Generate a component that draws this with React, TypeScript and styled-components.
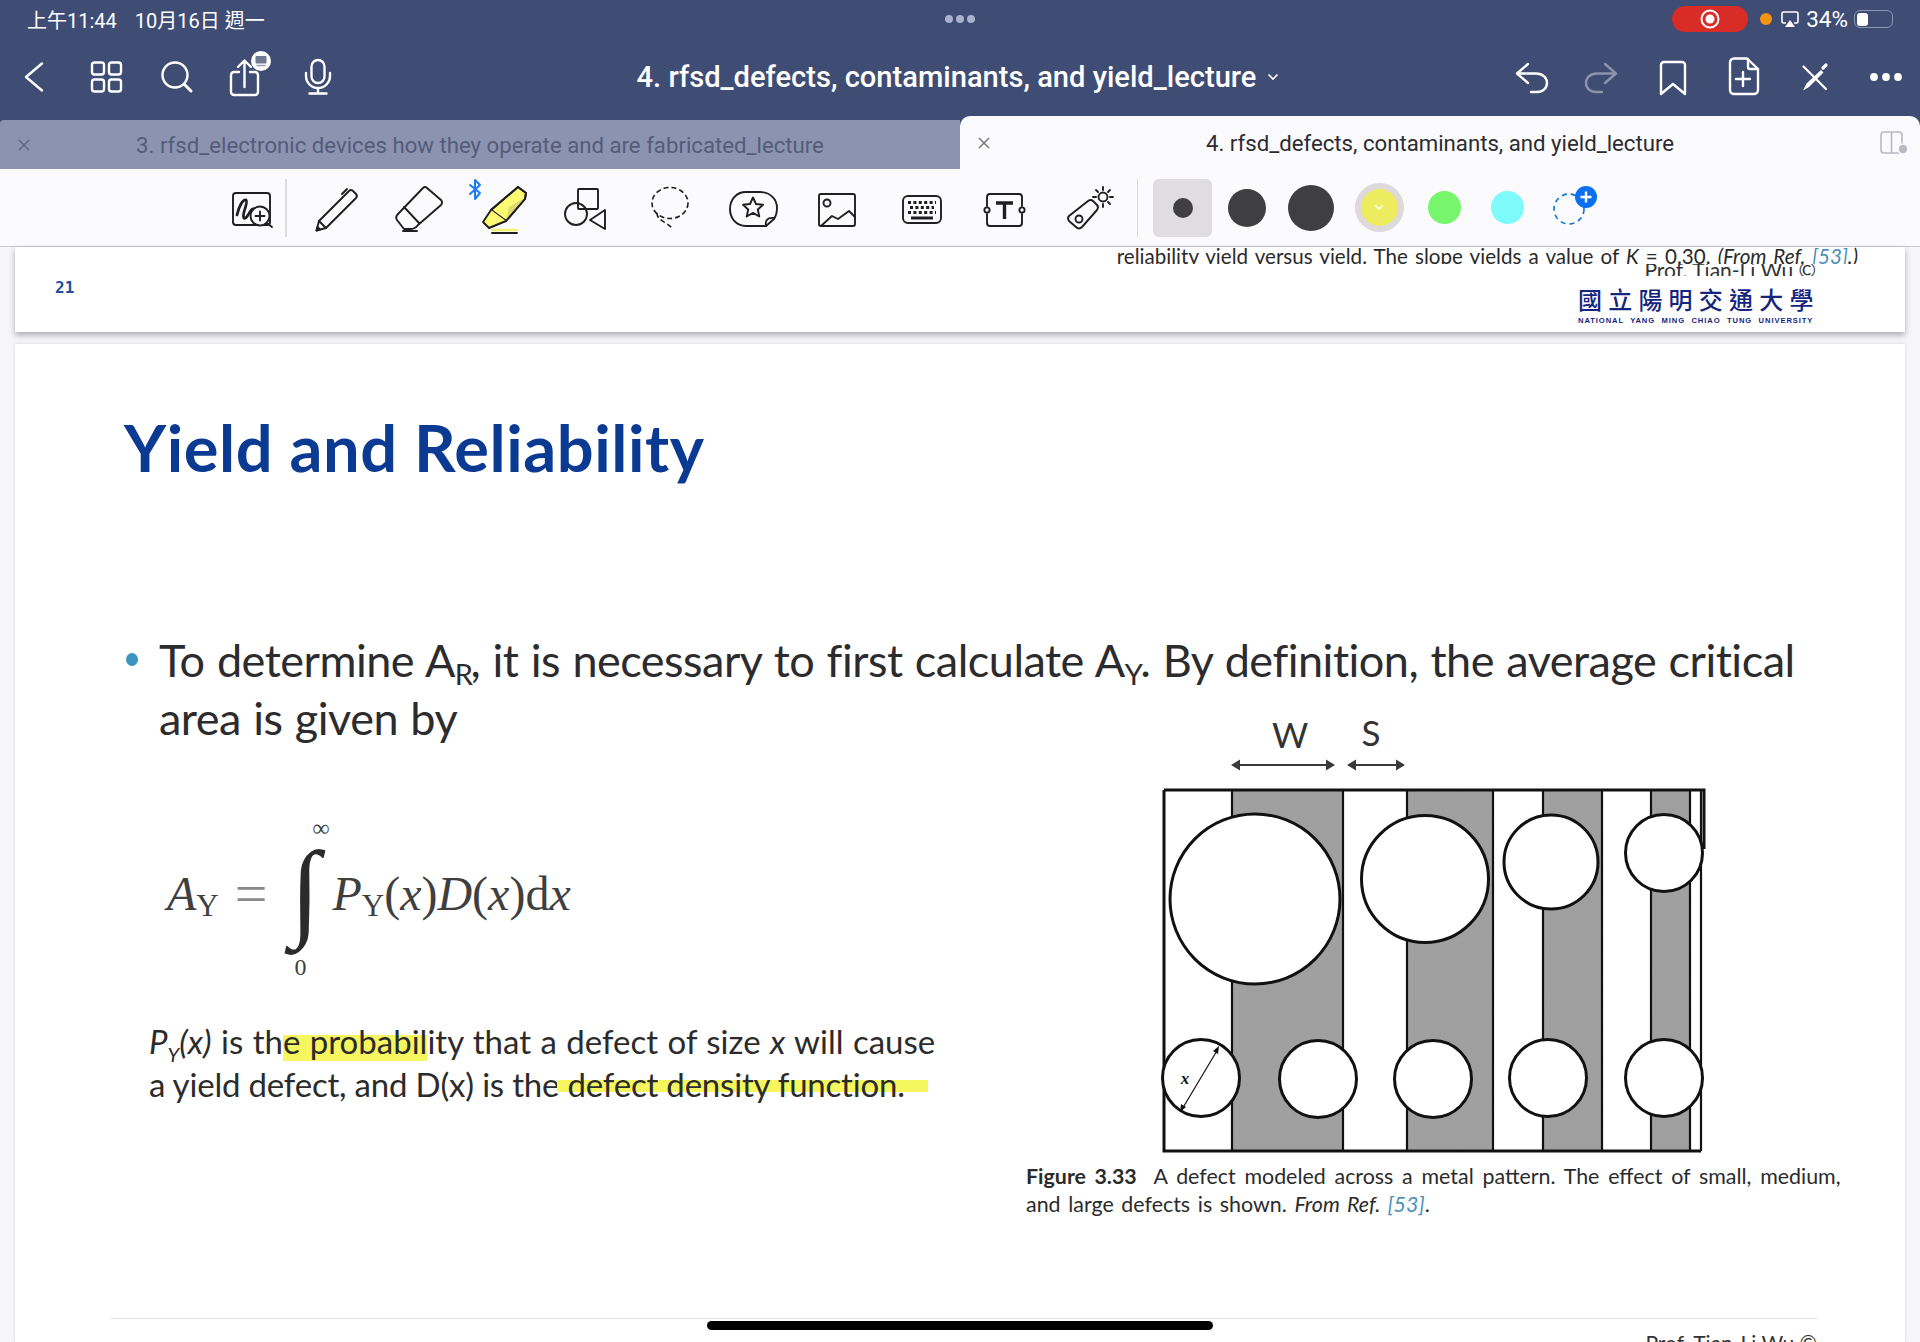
import React from 'react';
import styled, { createGlobalStyle } from 'styled-components';

const GlobalStyle = createGlobalStyle`
  html, body { margin: 0; padding: 0; height: 100%; background: #f6f5f8; }
  #root { height: 100%; }
  * { box-sizing: border-box; }
`;

const Screen = styled.div`
  width: 1920px;
  height: 1342px;
  display: flex;
  flex-direction: column;
  overflow: hidden;
  position: relative;
  font-family: Roboto, "Noto Sans CJK TC", sans-serif;
`;

const Header = styled.header`
  background: #3f4d74;
  height: 116px;
  flex: none;
  color: #fff;
`;

const StatusBar = styled.div`
  height: 38px;
  display: grid;
  grid-template-columns: 1fr auto 1fr;
  align-items: center;
  padding: 0 27px 0 27px;
`;

const Clock = styled.div`
  display: flex;
  gap: 18px;
  font-size: 20px;
  color: #fff;
  font-family: Roboto, "Noto Sans CJK TC", sans-serif;
`;

const Handle = styled.div`
  display: flex;
  gap: 3px;
`;

const HandleDot = styled.span`
  width: 8px;
  height: 8px;
  border-radius: 50%;
  background: #a9b1cc;
`;

const StatusRight = styled.div`
  display: flex;
  align-items: center;
  justify-content: flex-end;
`;

const RecordPill = styled.div`
  width: 76px;
  height: 26px;
  border-radius: 13px;
  background: #d92c27;
  display: flex;
  align-items: center;
  justify-content: center;
  margin-right: 12px;
`;

const OrangeDot = styled.span`
  width: 12px;
  height: 12px;
  border-radius: 50%;
  background: #f59314;
  margin-right: 9px;
`;

const Battery = styled.div`
  width: 39px;
  height: 18px;
  border: 1.5px solid #8d95b0;
  border-radius: 6px;
  padding: 1.5px;
  margin-left: 6px;
`;

const BatteryFill = styled.div`
  width: 34%;
  height: 100%;
  background: #fff;
  border-radius: 3px;
`;

const Percent = styled.span`
  font-size: 22.5px;
  margin-left: 7px;
`;

const NavRow = styled.div`
  height: 78px;
  display: grid;
  grid-template-columns: 1fr auto 1fr;
  align-items: center;
  padding: 0 14px 0 14px;
`;

const IconGroup = styled.div<{ $end?: boolean }>`
  display: flex;
  gap: 31px;
  justify-content: ${p => (p.$end ? 'flex-end' : 'flex-start')};
`;

const NavIcon = styled.svg<{ $dim?: boolean }>`
  width: 40px;
  height: 40px;
  overflow: visible;
  fill: none;
  stroke: ${p => (p.$dim ? '#8c94ad' : '#fff')};
  stroke-width: 2.4;
  stroke-linecap: round;
  stroke-linejoin: round;
`;

const DocTitle = styled.div`
  font-size: 29.1px;
  font-weight: 500;
  display: flex;
  align-items: center;
  gap: 11px;
  margin-left: -4px;
`;

const Tabs = styled.div`
  height: 53px;
  flex: none;
  display: flex;
  background: #3f4d74;
`;

const Tab = styled.div<{ $active?: boolean }>`
  width: 960px;
  position: relative;
  display: flex;
  align-items: center;
  justify-content: center;
  font-size: 22.2px;
  background: ${p => (p.$active ? '#fbfafc' : '#8b93b0')};
  color: ${p => (p.$active ? '#2c2c30' : '#545c7a')};
  margin-top: ${p => (p.$active ? '0' : '4px')};
  border-radius: ${p => (p.$active ? '10px 10px 0 0' : '4px 0 0 0')};
`;

const TabClose = styled.svg<{ $active?: boolean }>`
  position: absolute;
  left: 18px;
  top: 50%;
  margin-top: -6px;
  width: 12px;
  height: 12px;
  fill: none;
  stroke: ${p => (p.$active ? '#77777d' : '#5f6786')};
  stroke-width: 1.5;
`;

const SplitIcon = styled.svg`
  position: absolute;
  right: 11px;
  top: 15px;
  width: 29px;
  height: 24px;
  fill: none;
  stroke: #b9b9c0;
  stroke-width: 1.6;
`;

const Toolbar = styled.div`
  height: 78px;
  flex: none;
  background: #fbfafc;
  border-bottom: 1.5px solid #c9c8cd;
  display: flex;
  align-items: center;
  padding-left: 228px;
`;

const ToolIcon = styled.svg<{ $first?: boolean }>`
  width: ${p => (p.$first ? 48 : 60)}px;
  height: 60px;
  margin-top: 2px;
  flex: none;
  overflow: visible;
  fill: none;
  stroke: #1f1f22;
  stroke-width: 1.9;
  stroke-linecap: round;
  stroke-linejoin: round;
`;

const ToolList = styled.div`
  display: flex;
  gap: 23.6px;
`;

const VSep = styled.div<{ $l: number; $r: number }>`
  width: 1.5px;
  height: 58px;
  background: #dcdbe0;
  margin: 0 ${p => p.$r}px 0 ${p => p.$l}px;
  flex: none;
`;

const ColorSlot = styled.div<{ $w: number; $sel?: boolean }>`
  width: ${p => p.$w}px;
  height: 58px;
  flex: none;
  display: flex;
  align-items: center;
  justify-content: center;
  border-radius: 6px;
  position: relative;
  background: ${p => (p.$sel ? '#dfdde2' : 'transparent')};
`;

const Swatch = styled.span<{ $size: number; $color: string; $ring?: boolean }>`
  width: ${p => p.$size}px;
  height: ${p => p.$size}px;
  border-radius: 50%;
  background: ${p => p.$color};
  display: flex;
  align-items: center;
  justify-content: center;
  color: #fff;
  ${p => (p.$ring ? 'box-shadow: 0 0 0 6px #dedadc;' : '')}
`;

const AddColor = styled.svg`
  width: 50px;
  height: 50px;
  overflow: visible;
`;

const Canvas = styled.main`
  flex: 1;
  min-height: 0;
  background: #f6f5f8;
  padding: 0 15px;
  display: flex;
  flex-direction: column;
  gap: 12px;
`;

const PrevPage = styled.section`
  height: 85px;
  flex: none;
  background: #fff;
  box-shadow: 0 3px 6px rgba(60, 60, 70, 0.4);
  display: flex;
  justify-content: space-between;
  padding-right: 47px;
`;

const PageNumber = styled.div`
  margin: 31px 0 0 40px;
  font: 700 16px "DejaVu Sans Mono", monospace;
  color: #1c4fa0;
`;

const PrevRight = styled.div`
  display: flex;
  flex-direction: column;
  align-items: flex-end;
`;

const CutCaption = styled.div`
  height: 17px;
  overflow: hidden;
  font: 400 20.6px/19px Lato, sans-serif;
  color: #2a2a2a;
  white-space: nowrap;
  word-spacing: 1.9px;
`;

const CutSign = styled.div`
  height: 12px;
  margin-right: 42px;
  overflow: hidden;
  display: flex;
  align-items: flex-end;
  font: 400 21px/12px Lato, sans-serif;
  color: #333;
  white-space: nowrap;
`;

const Logo = styled.div`
  margin: 9px 44px 0 0;
  width: 236px;
  color: #15257d;
`;

const LogoCn = styled.div`
  font: 500 24px/27px "Noto Sans CJK TC", sans-serif;
  letter-spacing: 6.2px;
  white-space: nowrap;
`;

const LogoEn = styled.div`
  font: 700 7.6px/10px "Liberation Sans", sans-serif;
  white-space: nowrap;
  word-spacing: 3.4px;
  letter-spacing: 0.92px;
  margin-top: 4px;
`;

const Page = styled.section`
  flex: 1;
  min-height: 0;
  background: #fff;
  padding: 73px 0 0 0;
  position: relative;
  overflow: hidden;
  box-shadow: 0 0 3px rgba(60, 60, 70, 0.18);
`;

const SlideTitle = styled.h1`
  margin: 0 0 0 109px;
  font: 700 65px/60px Lato, sans-serif;
  color: #0b3a93;
  letter-spacing: 0.55px;
  white-space: nowrap;
`;

const BulletRow = styled.div`
  margin: 154px 0 0 109px;
  display: flex;
`;

const BulletDot = styled.span`
  width: 12px;
  height: 13px;
  border-radius: 50%;
  background: #3a93c0;
  margin: 22px 21px 0 2px;
  flex: none;
`;

const BulletText = styled.p`
  margin: 0;
  font: 400 45px/58px Lato, sans-serif;
  color: #2c2b2d;
  white-space: nowrap;
  letter-spacing: -0.5px;
  word-spacing: 1.3px;
  sub {
    font-size: 29px;
    line-height: 0;
    vertical-align: -8px;
    margin-right: -2px;
  }
`;

const Lower = styled.div`
  display: flex;
  align-items: flex-start;
`;

const LeftCol = styled.div`
  width: 1011px;
  padding: 63px 0 0 134px;
`;

const Formula = styled.div`
  height: 168px;
  margin: 0 0 0 18px;
  display: flex;
  align-items: center;
  font: italic 400 48px/1 "Liberation Serif", serif;
  color: #3f3f3f;
  sub {
    font-size: 31px;
    font-style: normal;
    line-height: 0;
    margin-top: 24px;
  }
`;

const Equals = styled.span`
  font: 400 58px/1 "Liberation Serif", serif;
  color: #8a8a8a;
  margin: 0 13px 0 16px;
`;

const IntegralStack = styled.div`
  width: 48px;
  height: 168px;
  position: relative;
  font-style: normal;
  margin-right: 4px;
`;

const IntegralMark = styled.span`
  position: absolute;
  left: 10px;
  top: 26px;
  font: 400 108px/108px "Liberation Serif", serif;
  color: #2b2b2b;
`;

const Limit = styled.span<{ $top: number; $left: number }>`
  position: absolute;
  top: ${p => p.$top}px;
  left: ${p => p.$left}px;
  font: 400 24px/24px "Liberation Serif", serif;
`;

const Upright = styled.span`
  font-style: normal;
`;

const Description = styled.p`
  margin: 42px 0 0 0;
  font: 400 33px/43px Lato, sans-serif;
  color: #2b2b2b;
  white-space: nowrap;
  i sub {
    font-size: 20px;
    line-height: 0;
  }
`;

// lines of the page were justified one by one, so each gets its own spacing
const Line = styled.span<{ $word: number; $letter?: number }>`
  word-spacing: ${p => p.$word}px;
  letter-spacing: ${p => p.$letter ?? 0}px;
`;

const Marker = styled.span<{ $thin?: boolean }>`
  position: relative;
  background: ${p =>
    p.$thin
      ? 'linear-gradient(transparent 40%, #f6f65e 40%, #f6f65e 70%, transparent 70%)'
      : 'linear-gradient(transparent 35%, #f6f65e 35%, #f6f65e 100%)'};
  padding: ${p => (p.$thin ? '0 23px 0 11px' : '0')};
  margin: ${p => (p.$thin ? '0 -23px 0 -11px' : '0')};
  ${p =>
    p.$thin
      ? ''
      : `&::before {
    content: '';
    position: absolute;
    left: 0;
    bottom: -5px;
    width: 18px;
    height: 8px;
    border-radius: 0 0 6px 6px;
    background: #f6f65e;
    z-index: -1;
  }`}
`;

const RightCol = styled.div`
  margin: -36px 0 0 0;
  width: 860px;
`;

const FigureArt = styled.svg`
  display: block;
  width: 550px;
  height: 448px;
  margin-left: 134px;
`;

const FigureCaption = styled.p`
  margin: 4px 0 0 0;
  font: 400 21.4px/27.5px Lato, sans-serif;
  color: #2b2b2b;
  white-space: nowrap;
  b {
    font-weight: 700;
  }
`;

const RefLink = styled.span`
  color: #4a8fb5;
`;

const FootLine = styled.div`
  position: absolute;
  left: 96px;
  right: 88px;
  top: 974px;
  height: 1px;
  background: #dfdfdf;
`;

const FootSign = styled.div`
  position: absolute;
  top: 987px;
  right: 88px;
  font: 400 21px/24px Lato, sans-serif;
  color: #333;
`;

const HomeBar = styled.div`
  position: absolute;
  left: 707px;
  top: 1321px;
  width: 506px;
  height: 9px;
  border-radius: 5px;
  background: #000;
`;

// header icons, all drawn in a 40 box
const BackIcon = () => <NavIcon viewBox="0 0 40 40"><path d="M28 6.5 12 20l16 13.5" /></NavIcon>;

const GridIcon = () => (
  <NavIcon viewBox="0 0 40 40">
    <rect x="7" y="5.500" width="12" height="12" rx="2.500" />
    <rect x="24" y="5.500" width="12" height="12" rx="2.500" />
    <rect x="7" y="22.500" width="12" height="12" rx="2.500" />
    <rect x="24" y="22.500" width="12" height="12" rx="2.500" />
  </NavIcon>
);

const SearchIcon = () => (
  <NavIcon viewBox="0 0 40 40">
    <circle cx="19" cy="18" r="12.500" />
    <path d="M28.500 27.500 35 34" strokeWidth="3" />
  </NavIcon>
);

const ShareIcon = () => (
  <NavIcon viewBox="0 0 40 40">
    <path d="M12 15H7a3 3 0 0 0-3 3v17a3 3 0 0 0 3 3h21a3 3 0 0 0 3-3V18a3 3 0 0 0-3-3h-5" />
    <path d="M17.500 30V4M11 10l6.500-6.500L24 10" />
    <circle cx="34" cy="4" r="10" fill="#fff" stroke="none" />
    <rect x="28.500" y="-1" width="11" height="7.500" rx="1" fill="#6f7893" stroke="none" />
    <path d="M30 8.500h8" stroke="#9aa0b4" strokeWidth="1.600" />
  </NavIcon>
);

const MicIcon = () => (
  <NavIcon viewBox="0 0 40 40">
    <rect x="13.500" y="3" width="13" height="23" rx="6.500" />
    <path d="M8 16v3a12 12 0 0 0 24 0v-3M20 31v5M11.500 36.500h17" />
  </NavIcon>
);

const UndoIcon = ({ dim }: { dim?: boolean }) => (
  <NavIcon viewBox="0 0 40 40" $dim={dim} style={dim ? { transform: 'scaleX(-1)' } : undefined}>
    <path d="M17 7 6 16.500 17 26M6.500 16.500H25c7 0 11 4.500 11 9.500s-4 9-10 9h-6" />
  </NavIcon>
);

const BookmarkIcon = () => (
  <NavIcon viewBox="0 0 40 40">
    <path d="M8 8a3 3 0 0 1 3-3h18a3 3 0 0 1 3 3v29L20 27 8 37z" />
  </NavIcon>
);

const NewDocIcon = () => (
  <NavIcon viewBox="0 0 40 40">
    <path d="M10 1.500h13L34 12v21a4 4 0 0 1-4 4H10a4 4 0 0 1-4-4V5.500a4 4 0 0 1 4-4z" />
    <path d="M24 2v8a2 2 0 0 0 2 2h8M19 15v14M12 22h14" />
  </NavIcon>
);

const PenCrossIcon = () => (
  <NavIcon viewBox="0 0 40 40">
    <path d="M8.500 9.500 31 32" strokeWidth="2.200" />
    <path d="M8 33.500l3.500-7L26 13l2.500 2.500L14 30z" fill="#fff" stroke="none" />
    <path d="M28 11l3-3" strokeWidth="3.200" />
  </NavIcon>
);

const MoreIcon = () => (
  <NavIcon viewBox="0 0 40 40">
    <g fill="#fff" stroke="none">
      <circle cx="8" cy="20" r="3.900" />
      <circle cx="20" cy="20" r="3.900" />
      <circle cx="32" cy="20" r="3.900" />
    </g>
  </NavIcon>
);

const CloseMark = ({ active }: { active?: boolean }) => (
  <TabClose viewBox="0 0 12 12" $active={active}><path d="M1 1l10 10M11 1 1 11" /></TabClose>
);

const InkZoomTool = () => (
  <ToolIcon viewBox="0 0 48 60" $first>
    <rect x="5" y="14" width="37" height="32" rx="3" />
    <path d="M9 36c2-9 6-16 9-15 3 2-5 15-2 18 3 2 6-9 9-9" strokeWidth="2.800" />
    <circle cx="32" cy="37" r="9.500" fill="#fbfafc" />
    <path d="M39 44l5 4M32 32.500v9M27.500 37h9" />
  </ToolIcon>
);

const PenTool = () => (
  <ToolIcon viewBox="0 0 60 60">
    <path d="M10.500 51.500 13 42l30-30a3 3 0 0 1 4 0l3 3a3 3 0 0 1 0 4L20 49z" />
    <path d="M13 42l7 7M36 15l5-5" />
    <path d="M10.500 51.500l1-3.500 2.500 2.500z" fill="#1f1f22" />
  </ToolIcon>
);

const EraserTool = () => (
  <ToolIcon viewBox="0 0 60 60">
    <path d="M34 9a3 3 0 0 1 4 0l14 12a3.500 3.500 0 0 1 0 5L29 46q-3 4-7 4h-7l-7-9q-2-3 1-6z" />
    <path d="M15 28l15 16M14 52h14" />
  </ToolIcon>
);

const HighlighterTool = () => (
  <ToolIcon viewBox="0 0 60 60">
    <path d="M45 8l8 6-1 6-19 22-15-11 20-17z" fill="#fdfb72" />
    <path d="M36 28l15-9-18 22z" fill="#dedc70" stroke="none" />
    <path d="M45 8l8 6-1 6-19 22-15-11 20-17z" />
    <path d="M18 31 10 43l6 6 17-7" fill="#fdfb72" />
    <path d="M19 51h25" stroke="#f4f26a" strokeWidth="2.400" />
    <path d="M19 54h25" />
    <path d="M-3 6 7 14 2 20V1l5 5L-3 15" stroke="#1a7df0" strokeWidth="2" />
  </ToolIcon>
);

const ShapesTool = () => (
  <ToolIcon viewBox="0 0 60 60">
    <rect x="22" y="10" width="20" height="20" rx="1" />
    <circle cx="20" cy="35" r="11" />
    <path d="M34 41 49 31v19z" />
  </ToolIcon>
);

const LassoTool = () => (
  <ToolIcon viewBox="0 0 60 60">
    <ellipse cx="30" cy="24" rx="18" ry="15.500" strokeDasharray="5 3" strokeLinecap="butt" strokeWidth="1.600" />
    <path d="M17 34c0 8 9 8 16 16" strokeDasharray="5 3" strokeLinecap="butt" strokeWidth="1.600" />
  </ToolIcon>
);

const StickerTool = () => (
  <ToolIcon viewBox="0 0 60 60">
    <path d="M23 13h14c10 0 17 7 17 16 0 5-1 8-3 11l-8 7H23C13 47 7 39 7 30s6-17 16-17z" />
    <path d="M43 47c-1-5 1-9 8-8" />
    <path d="M30 18.500l3 6.500 7 .8-5.200 4.700 1.500 7-6.300-3.600-6.300 3.600 1.500-7-5.200-4.700 7-.8z" />
  </ToolIcon>
);

const ImageTool = () => (
  <ToolIcon viewBox="0 0 60 60">
    <rect x="12" y="15" width="36" height="32" rx="2" />
    <circle cx="20" cy="24" r="3.500" />
    <path d="M14 47l11-10 6 3 11-8 6 6" />
  </ToolIcon>
);

const KeyboardTool = () => (
  <ToolIcon viewBox="0 0 60 60">
    <rect x="12" y="17" width="38" height="27" rx="5" />
    <path d="M17 23.500h28M19 28.500h24M17 33.500h28" strokeWidth="3" strokeDasharray="3 2.400" strokeLinecap="butt" />
    <path d="M20 39h22" strokeWidth="3" strokeLinecap="butt" />
  </ToolIcon>
);

const TextBoxTool = () => (
  <ToolIcon viewBox="0 0 60 60">
    <path d="M13 27v-9a3 3 0 0 1 3-3h29a3 3 0 0 1 3 3v9M13 35v9a3 3 0 0 0 3 3h29a3 3 0 0 0 3-3v-9" />
    <circle cx="13" cy="31" r="2.600" />
    <circle cx="48" cy="31" r="2.600" />
    <path d="M22 24h17M30.500 24v16" strokeWidth="3.400" strokeLinecap="butt" />
  </ToolIcon>
);

const LaserTool = () => (
  <ToolIcon viewBox="0 0 60 60">
    <path d="M30 22q3-2 5 0l4 4q2 2 0 5L24 48q-3 3-6 0l-7-6q-2-3 0-5z" />
    <circle cx="21" cy="40" r="3.500" />
    <circle cx="45" cy="18" r="4.500" />
    <path d="M45 8v3M45 25v3M35 18h3M52 18h3M38 11l2 2M50 23l2 2M52 11l-2 2" />
  </ToolIcon>
);

export default function App() {
  return (
    <Screen>
      <GlobalStyle />
      <Header>
        <StatusBar>
          <Clock>
            <span>上午11:44</span>
            <span>10月16日 週一</span>
          </Clock>
          <Handle>
            <HandleDot />
            <HandleDot />
            <HandleDot />
          </Handle>
          <StatusRight>
            <RecordPill>
              <svg width="22" height="22" viewBox="0 0 22 22">
                <circle cx="11" cy="11" r="8.500" fill="none" stroke="#fff" strokeWidth="2" />
                <circle cx="11" cy="11" r="4.500" fill="#fff" />
              </svg>
            </RecordPill>
            <OrangeDot />
            <svg width="18" height="18" viewBox="0 0 18 18" fill="none">
              <path d="M5 13H2.500A1.500 1.500 0 0 1 1 11.500v-8A1.500 1.500 0 0 1 2.500 2h13A1.500 1.500 0 0 1 17 3.500v8a1.500 1.500 0 0 1-1.500 1.500H13" stroke="#fff" strokeWidth="1.600" />
              <path d="M9 10l5 7H4z" fill="#fff" />
            </svg>
            <Percent>34%</Percent>
            <Battery>
              <BatteryFill />
            </Battery>
          </StatusRight>
        </StatusBar>
        <NavRow>
          <IconGroup>
            <BackIcon />
            <GridIcon />
            <SearchIcon />
            <ShareIcon />
            <MicIcon />
          </IconGroup>
          <DocTitle>
            4. rfsd_defects, contaminants, and yield_lecture
            <svg width="12" height="8" viewBox="0 0 12 8" fill="none" stroke="#fff" strokeWidth="1.600">
              <path d="M1.500 1.500 6 6l4.500-4.500" />
            </svg>
          </DocTitle>
          <IconGroup $end>
            <UndoIcon />
            <UndoIcon dim />
            <BookmarkIcon />
            <NewDocIcon />
            <PenCrossIcon />
            <MoreIcon />
          </IconGroup>
        </NavRow>
      </Header>

      <Tabs>
        <Tab>
          <CloseMark />
          3. rfsd_electronic devices how they operate and are fabricated_lecture
        </Tab>
        <Tab $active>
          <CloseMark active />
          4. rfsd_defects, contaminants, and yield_lecture
          <SplitIcon viewBox="0 0 29 24">
            <rect x="1" y="1" width="21" height="21" rx="3" />
            <path d="M11.500 1v21" />
            <circle cx="23" cy="18" r="5" fill="#b9b9c0" stroke="#fbfafc" />
          </SplitIcon>
        </Tab>
      </Tabs>

      <Toolbar>
        <InkZoomTool />
        <VSep $l={9} $r={19} />
        <ToolList>
          <PenTool />
          <EraserTool />
          <HighlighterTool />
          <ShapesTool />
          <LassoTool />
          <StickerTool />
          <ImageTool />
          <KeyboardTool />
          <TextBoxTool />
          <LaserTool />
        </ToolList>
        <VSep $l={19} $r={15} />
        <ColorSlot $w={59} $sel>
          <Swatch $size={20} $color="#3f3f42" />
        </ColorSlot>
        <ColorSlot $w={70}>
          <Swatch $size={38} $color="#3f3f42" />
        </ColorSlot>
        <ColorSlot $w={58}>
          <Swatch $size={46} $color="#3f3f42" />
        </ColorSlot>
        <ColorSlot $w={78}>
          <Swatch $size={37} $color="#ecec5e" $ring>
            <svg width="10" height="7" viewBox="0 0 10 7" fill="none" stroke="#fff" strokeWidth="1.400">
              <path d="M1.500 1.500 5 5l3.500-3.500" />
            </svg>
          </Swatch>
        </ColorSlot>
        <ColorSlot $w={52}>
          <Swatch $size={33} $color="#76f56d" />
        </ColorSlot>
        <ColorSlot $w={74}>
          <Swatch $size={33} $color="#7ffafa" />
        </ColorSlot>
        <ColorSlot $w={50}>
          <AddColor viewBox="0 0 50 50">
            <circle cx="25" cy="26" r="15" fill="none" stroke="#0a74d8" strokeWidth="1.600" strokeDasharray="5 4" />
            <circle cx="42" cy="14" r="11" fill="#0a6ff0" />
            <path d="M42 8.500v11M36.500 14h11" stroke="#fff" strokeWidth="2.400" />
          </AddColor>
        </ColorSlot>
      </Toolbar>

      <Canvas>
        <PrevPage>
          <PageNumber>21</PageNumber>
          <PrevRight>
            <CutCaption>
              reliability yield versus yield. The slope yields a value of <i>K</i> = 0.30. <i>(From Ref. <RefLink>[53]</RefLink>.)</i>
            </CutCaption>
            <CutSign>Prof. Tian-Li Wu ©</CutSign>
            <Logo>
              <LogoCn>國立陽明交通大學</LogoCn>
              <LogoEn>NATIONAL YANG MING CHIAO TUNG UNIVERSITY</LogoEn>
            </Logo>
          </PrevRight>
        </PrevPage>

        <Page>
          <SlideTitle>Yield and Reliability</SlideTitle>
          <BulletRow>
            <BulletDot />
            <BulletText>
              To determine A<sub>R</sub>, it is necessary to first calculate A<sub>Y</sub>. By definition, the average critical
              <br />
              area is given by
            </BulletText>
          </BulletRow>
          <Lower>
            <LeftCol>
              <Formula>
                A<sub>Y</sub>
                <Equals>=</Equals>
                <IntegralStack>
                  <Limit $top={6} $left={32}>∞</Limit>
                  <IntegralMark>∫</IntegralMark>
                  <Limit $top={145} $left={14}>0</Limit>
                </IntegralStack>
                P<sub>Y</sub>
                <Upright>(</Upright>x<Upright>)</Upright>D<Upright>(</Upright>x<Upright>)d</Upright>x
              </Formula>
              <Description>
                <Line $word={1}>
                  <i>P<sub>Y</sub>(x)</i> is th<Marker>e probabil</Marker>ity that a defect of size <i>x</i> will cause
                </Line>
                <br />
                <Line $word={0} $letter={-0.2}>
                  a yield defect, and D(x) is the <Marker $thin>defect density function.</Marker>
                </Line>
              </Description>
            </LeftCol>
            <RightCol>
              <FigureArt viewBox="1160 712 550 448">
                <defs>
                  <filter id="grain" x="0" y="0" width="100%" height="100%">
                    <feTurbulence type="fractalNoise" baseFrequency="0.8" numOctaves="2" seed="4" />
                    <feColorMatrix type="matrix" values="0 0 0 0 0.35  0 0 0 0 0.35  0 0 0 0 0.35  1.6 0 0 0 -0.55" />
                    <feComposite in2="SourceGraphic" operator="in" />
                    <feMerge>
                      <feMergeNode in="SourceGraphic" />
                      <feMergeNode />
                    </feMerge>
                  </filter>
                </defs>
                <text x="1290" y="749" textAnchor="middle" fontFamily="Lato, sans-serif" fontSize="35" fill="#333">W</text>
                <text x="1371" y="747" textAnchor="middle" fontFamily="Lato, sans-serif" fontSize="35" fill="#333">S</text>
                <g stroke="#3a3a3a" strokeWidth="2" fill="#3a3a3a">
                  <path d="M1238 766H1328M1354 766H1398" />
                  <path d="M1231 766l9-5.500v11zM1335 766l-9-5.500v11zM1347 766l9-5.500v11zM1405 766l-9-5.500v11z" stroke="none" />
                </g>
                <g fill="#a0a0a0" filter="url(#grain)">
                  <rect x="1232" y="792" width="111" height="360" />
                  <rect x="1407" y="792" width="86" height="360" />
                  <rect x="1543" y="792" width="59" height="360" />
                  <rect x="1651" y="792" width="39" height="360" />
                </g>
                <g stroke="#111" strokeWidth="2.200" fill="none">
                  <path d="M1232 792V1152M1343 792V1152M1407 792V1152M1493 792V1152M1543 792V1152M1602 792V1152M1651 792V1152M1690 792V1152M1701 792V1152" />
                  <path d="M1164 791H1704V850M1164 791V1152H1701" strokeWidth="3" />
                </g>
                <g stroke="#111" strokeWidth="3" fill="#fff">
                  <circle cx="1255" cy="900" r="85" />
                  <circle cx="1425" cy="880" r="63.500" />
                  <circle cx="1551" cy="863" r="47" />
                  <circle cx="1664" cy="854" r="38.500" />
                  <circle cx="1201" cy="1079" r="38.500" />
                  <circle cx="1318" cy="1080" r="38.500" />
                  <circle cx="1433" cy="1080" r="38.500" />
                  <circle cx="1548" cy="1079" r="38.500" />
                  <circle cx="1664" cy="1079" r="38.500" />
                </g>
                <path d="M1181 1112 1218 1050" stroke="#111" strokeWidth="1.200" />
                <path d="M1219 1047l-1 8-5-3zM1180 1113l1-8 5 3z" fill="#111" />
                <text x="1185" y="1085" textAnchor="middle" fontFamily="Liberation Serif, serif" fontStyle="italic" fontWeight="700" fontSize="17" fill="#111">x</text>
              </FigureArt>
              <FigureCaption>
                <Line $word={3.3}>
                  <b>Figure 3.33</b>&nbsp; A defect modeled across a metal pattern. The effect of small, medium,
                </Line>
                <br />
                <Line $word={2.2}>
                  and large defects is shown. <i>From Ref. <RefLink>[53]</RefLink></i>.
                </Line>
              </FigureCaption>
            </RightCol>
          </Lower>
          <FootLine />
          <FootSign>Prof. Tian-Li Wu ©</FootSign>
        </Page>
      </Canvas>
      <HomeBar />
    </Screen>
  );
}
